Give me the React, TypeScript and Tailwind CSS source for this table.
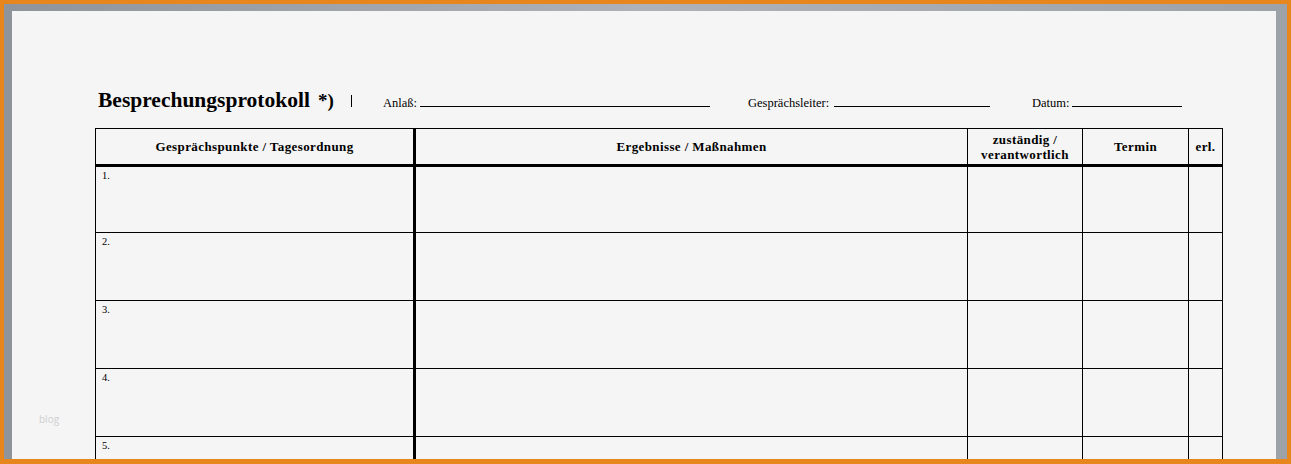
import React from 'react';

const serif = { fontFamily: '"Liberation Serif", "DejaVu Serif", serif' };

const columns = [
  { label: 'Gesprächspunkte / Tagesordnung', width: 'w-[320px]', border: 'border-r-[3px]' },
  { label: 'Ergebnisse / Maßnahmen', width: 'w-[552px]', border: 'border-r' },
  { label: 'zuständig / verantwortlich', width: 'w-[115px]', border: 'border-r' },
  { label: 'Termin', width: 'w-[106px]', border: 'border-r' },
  { label: 'erl.', width: 'w-[34px]', border: 'border-r' }
];

const rows = [
  { n: '1.', height: 'h-[66px]' },
  { n: '2.', height: 'h-[68px]' },
  { n: '3.', height: 'h-[68px]' },
  { n: '4.', height: 'h-[68px]' },
  { n: '5.', height: 'h-[68px]' }
];

const App: React.FC = () => {
  return (
    <div className="w-[1291px] h-[464px] overflow-hidden bg-[#e8861e] pt-[4px] pl-[4px] pr-[4px] pb-[5px]">
      <div className="h-full flex flex-col bg-gradient-to-r from-[#8f949b] via-[#aeb2b8] to-[#9da2a9] pl-[8px] pt-[7px] pr-[11px]">
        <div className="relative flex-1 overflow-hidden bg-[#f5f5f5] text-black" style={serif}>
          <div className="pl-[86px] pt-[73px] flex items-baseline h-[117px]">
            <span className="w-[220px] text-[21.5px] font-bold whitespace-nowrap">Besprechungsprotokoll</span>
            <span className="w-[33px] text-[19px] font-bold">*)</span>
            <span className="w-[32px] flex">
              <span className="inline-block w-px h-[12px] bg-black mb-[-1px]"></span>
            </span>
            <span className="w-[37px] text-[12.5px]">Anlaß:</span>
            <span className="w-[290px] border-b border-black mb-[-1px]"></span>
            <span className="w-[38px]"></span>
            <span className="w-[86px] text-[12.5px]">Gesprächsleiter:</span>
            <span className="w-[156px] border-b border-black mb-[-1px]"></span>
            <span className="w-[42px]"></span>
            <span className="w-[40px] text-[12.5px]">Datum:</span>
            <span className="w-[110px] border-b border-black mb-[-1px]"></span>
          </div>

          <div className="ml-[83px] w-[1128px] border-l border-t border-black">
            <div className="flex h-[38px] border-b-[3px] border-black">
              {columns.map((col) => (
                <div
                  key={col.label}
                  className={`${col.width} ${col.border} border-black flex items-center justify-center text-center text-[13px] tracking-[0.03em] font-bold leading-[15px] px-1`}
                >
                  {col.label}
                </div>
              ))}
            </div>
            {rows.map((row) => (
              <div key={row.n} className={`flex ${row.height} border-b border-black`}>
                {columns.map((col, i) => (
                  <div key={col.label} className={`${col.width} ${col.border} border-black`}>
                    {i === 0 && <span className="block pl-[6px] pt-[1px] text-[10.5px]">{row.n}</span>}
                  </div>
                ))}
              </div>
            ))}
          </div>

          <span
            className="absolute left-[27px] top-[401px] text-[10px] text-[#cfcfcf]"
            style={{ fontFamily: '"Open Sans", sans-serif' }}
          >
            blog
          </span>
        </div>
      </div>
    </div>
  );
};

export default App;
